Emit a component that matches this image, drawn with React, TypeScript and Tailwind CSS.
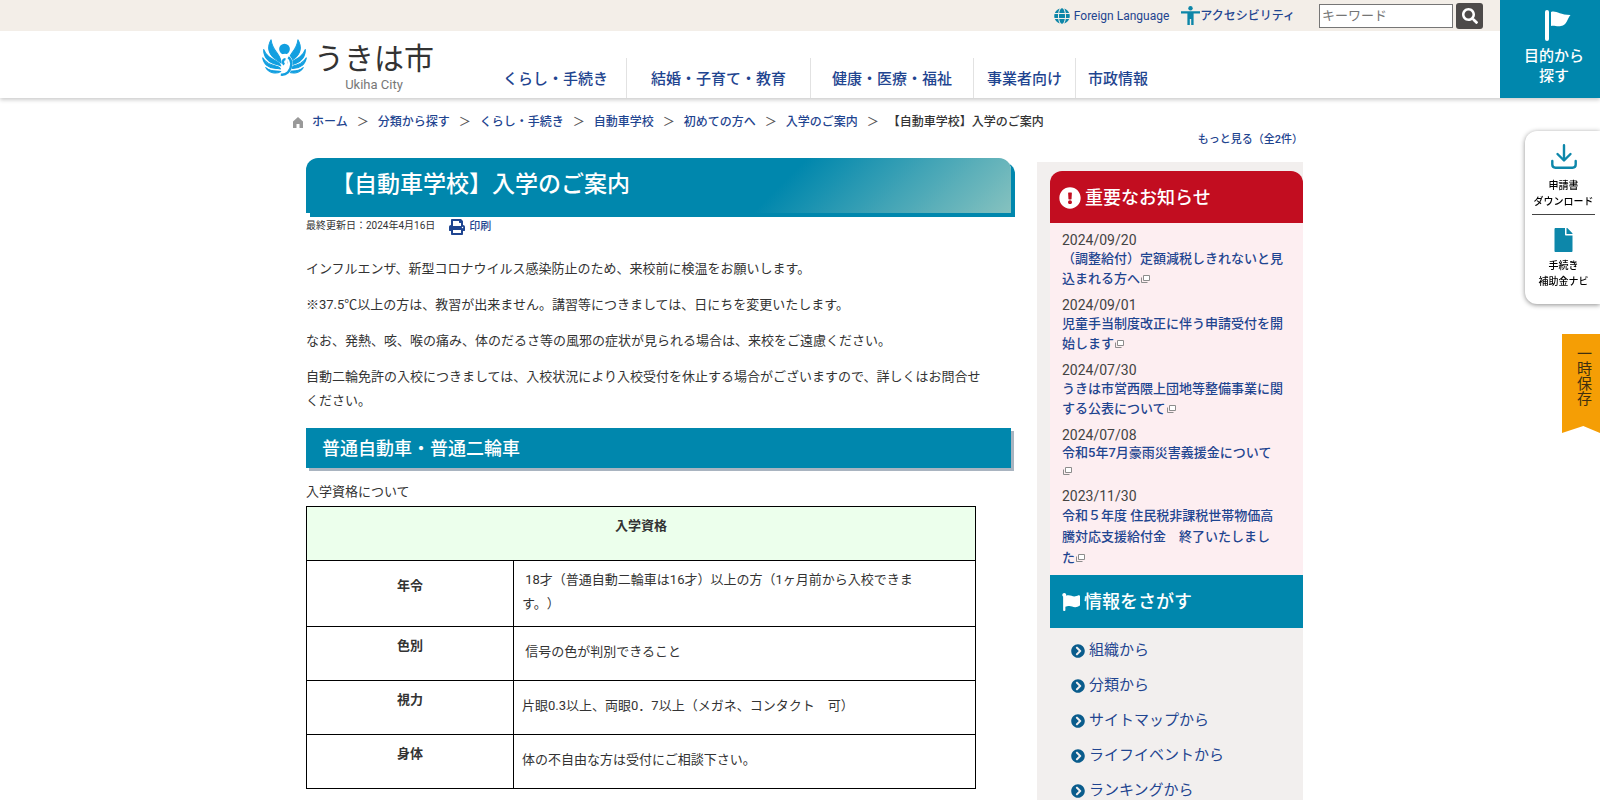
import { Fragment } from 'react'
import {
  FaChevronCircleRight,
  FaExclamationCircle,
  FaFile,
  FaFlag,
  FaGlobe,
  FaPrint,
  FaSearch,
} from 'react-icons/fa'

type NavItem = {
  label: string
  className: string
}

type NewsItem = {
  date: string
  title: string
  className: string
}

const navItems: NavItem[] = [
  { label: 'くらし・手続き', className: 'pr-[18px]' },
  { label: '結婚・子育て・教育', className: 'border-l border-[#e2e2e2] px-6' },
  { label: '健康・医療・福祉', className: 'border-l border-[#e2e2e2] px-[21px]' },
  { label: '事業者向け', className: 'border-l border-[#e2e2e2] px-[13px]' },
  { label: '市政情報', className: 'border-l border-[#e2e2e2] pl-3' },
]

const crumbs = ['ホーム', '分類から探す', 'くらし・手続き', '自動車学校', '初めての方へ', '入学のご案内']

const news: NewsItem[] = [
  {
    date: '2024/09/20',
    title: '（調整給付）定額減税しきれないと見\n込まれる方へ',
    className: 'leading-5',
  },
  {
    date: '2024/09/01',
    title: '児童手当制度改正に伴う申請受付を開\n始します',
    className: 'leading-5',
  },
  {
    date: '2024/07/30',
    title: 'うきは市営西隈上団地等整備事業に関\nする公表について',
    className: 'leading-5',
  },
  {
    date: '2024/07/08',
    title: '令和5年7月豪雨災害義援金について\n',
    className: 'leading-[18px]',
  },
  {
    date: '2023/11/30',
    title: '令和５年度 住民税非課税世帯物価高\n騰対応支援給付金　終了いたしまし\nた',
    className: 'leading-[21px]',
  },
]

const searchLinks = ['組織から', '分類から', 'サイトマップから', 'ライフイベントから', 'ランキングから']

const requirements = [
  { name: '年令', lines: ['\u00a018才（普通自動二輪車は16才）以上の方（1ヶ月前から入校できま', 'す。）'] },
  { name: '色別', lines: ['\u00a0信号の色が判別できること'] },
  { name: '視力', lines: ['片眼0.3以上、両眼0．7以上（メガネ、コンタクト　可）'] },
  { name: '身体', lines: ['体の不自由な方は受付にご相談下さい。'] },
]

function Wing() {
  return (
    <g stroke="#129fe0" strokeWidth="3" strokeLinejoin="round">
      <path d="M27 2C14 24 20 44 35 56C44 63 52 67 57 72C57 58 52 52 45 42C36 30 29 20 27 2Z" />
      <path d="M5 31C4 52 18 67 34 73C43 76 51 77 56 80C55 74 51 71 44 67C26 58 12 50 5 31Z" />
      <path d="M2 56C5 75 20 86 38 87C46 88 51 88 55 89C54 85 50 83 43 81C24 77 11 72 2 56Z" />
      <path d="M11 85C21 102 42 105 56 97C54 95 50 95 42 95C29 95 20 92 11 85Z" />
    </g>
  )
}

function LogoMark() {
  return (
    <svg viewBox="0 0 134 110" className="h-[37px] w-[45px]" fill="#129fe0" aria-hidden="true">
      <circle cx="67" cy="30" r="16" />
      <Wing />
      <g transform="translate(134 0) scale(-1 1)">
        <Wing />
      </g>
      <path
        d="M60 54C74 46 86 58 84 76C82 94 74 104 60 106"
        fill="none"
        stroke="#fff"
        strokeWidth="14"
      />
      <path
        d="M60 56C70 50 80 56 79 70C78 86 75 96 66 105"
        fill="none"
        stroke="#fff"
        strokeWidth="6"
      />
      <path
        d="M66 76C60 70 62 60 70 60M56 106C72 108 86 96 87 76C88 66 84 58 78 54"
        fill="none"
        stroke="#129fe0"
        strokeWidth="7"
      />
    </svg>
  )
}

function AccessIcon() {
  return (
    <svg viewBox="0 0 19 19" className="h-[19px] w-[19px]" fill="#0d86a8" aria-hidden="true">
      <circle cx="9.5" cy="2.2" r="2.2" />
      <path d="M0 5.2H19V7.4H12.6V19H10.2V13H8.8V19H6.4V7.4H0Z" />
    </svg>
  )
}

function PennantIcon() {
  return (
    <svg viewBox="0 0 26 31" className="h-[31px] w-[26px]" fill="currentColor" aria-hidden="true">
      <rect x="0" y="0" width="4" height="31" rx="2" />
      <path d="M6 2C11 0 14 5 25.5 5C22 9 22 15 16 16C12 17 9 15 6 16Z" />
    </svg>
  )
}

function DownloadIcon() {
  return (
    <svg
      viewBox="0 0 26 25"
      className="h-[25px] w-[26px]"
      fill="none"
      stroke="#0d87aa"
      strokeWidth="2.4"
      strokeLinecap="round"
      strokeLinejoin="round"
      aria-hidden="true"
    >
      <path d="M13 1.2V16M6.5 10L13 16.5L19.5 10" />
      <path d="M1.3 17V20.5C1.3 22.5 2.5 23.7 4.5 23.7H21.5C23.5 23.7 24.7 22.5 24.7 20.5V17" />
    </svg>
  )
}

function HomeIcon() {
  return (
    <svg viewBox="0 0 10 11" className="h-[11px] w-[10px]" fill="#999" aria-hidden="true">
      <path d="M5 0L10 4.5V11H6.5V7H3.5V11H0V4.5Z" />
    </svg>
  )
}

function NewWindowIcon() {
  return (
    <svg
      viewBox="0 0 9 8"
      className="ml-px inline-block h-2 w-[9px] align-baseline"
      fill="none"
      stroke="#8c8c8c"
      role="img"
      aria-label="新しいウィンドウで開く"
    >
      <path d="M2.5 0.5H8.5V5.5H2.5Z" fill="#fff" />
      <path d="M0.5 2.5V7.5H6.5" />
    </svg>
  )
}

function Header() {
  return (
    <header className="relative flex bg-white shadow-[0_2px_4px_rgba(0,0,0,0.2)]">
      <div className="flex-1">
        <div className="flex h-[31px] items-center justify-end bg-[#f3eee8] pr-[17px] text-xs text-[#1f4590]">
          <a href="#" className="mr-3 flex items-center gap-1">
            <FaGlobe className="size-4 text-[#0d86a8]" />
            Foreign Language
          </a>
          <a href="#" className="mr-6 flex items-center font-medium">
            <AccessIcon />
            アクセシビリティ
          </a>
          <form className="flex items-center gap-[3px]" onSubmit={(e) => e.preventDefault()}>
            <input
              type="text"
              aria-label="キーワード"
              placeholder="キーワード"
              className="h-6 w-[134px] border border-[#767676] bg-white px-[2px] text-[13px] text-[#333] placeholder:text-[#757575]"
            />
            <button
              type="submit"
              aria-label="検索"
              className="flex h-[26px] w-[27px] items-center justify-center rounded-[3px] bg-[#4d4a49] text-white"
            >
              <FaSearch className="size-4" />
            </button>
          </form>
        </div>
        <div className="mx-auto flex h-[67px] max-w-[976px] items-end">
          <a href="#" className="flex w-[241px] items-start gap-[7px] self-start pt-2">
            <LogoMark />
            <span className="flex flex-col items-center text-[#333]">
              <span className="text-[30px] leading-10">うきは市</span>
              <span className="text-[13px] leading-3 text-[#777]">Ukiha City</span>
            </span>
          </a>
          <nav className="flex text-[15px] font-medium text-[#1f4590]">
            {navItems.map((item) => (
              <a key={item.label} href="#" className={`flex h-10 items-center pt-[2px] ${item.className}`}>
                {item.label}
              </a>
            ))}
          </nav>
        </div>
      </div>
      <button
        type="button"
        className="flex w-[100px] flex-col items-center bg-[#0087ad] pt-[10px] pl-2 text-[15px] leading-5 font-medium text-white"
      >
        <span className="pl-2">
          <PennantIcon />
        </span>
        <span className="mt-[5px]">
          目的から
          <br />
          探す
        </span>
      </button>
    </header>
  )
}

function Breadcrumb() {
  return (
    <nav aria-label="パンくずリスト" className="flex h-[18px] items-center gap-[9px] text-xs font-medium">
      <HomeIcon />
      {crumbs.map((crumb) => (
        <Fragment key={crumb}>
          <a href="#" className="text-[#1f4590]">
            {crumb}
          </a>
          <span className="text-[#555]">＞</span>
        </Fragment>
      ))}
      <span>【自動車学校】入学のご案内</span>
    </nav>
  )
}

function Article() {
  return (
    <main className="flex-1 text-[13px] leading-6">
      <h1 className="flex h-[55px] items-center rounded-t-xl bg-[linear-gradient(135deg,#0087ad_66%,#86c2bf_100%)] pb-px pl-[25px] text-[23px] font-medium text-white shadow-[4px_4px_0_#0087ad]">
        【自動車学校】入学のご案内
      </h1>
      <div className="mt-1 flex h-[18px] items-center text-[10px]">
        <span>最終更新日：2024年4月16日</span>
        <a href="#" className="ml-[14px] flex items-center gap-1 pt-px text-[11px] font-medium text-[#1f4590]">
          <FaPrint className="size-4" />
          印刷
        </a>
      </div>
      <div className="mt-[22px] space-y-3 pr-6">
        <p>インフルエンザ、新型コロナウイルス感染防止のため、来校前に検温をお願いします。</p>
        <p>※37.5℃以上の方は、教習が出来ません。講習等につきましては、日にちを変更いたします。</p>
        <p>なお、発熱、咳、喉の痛み、体のだるさ等の風邪の症状が見られる場合は、来校をご遠慮ください。</p>
        <p>
          自動二輪免許の入校につきましては、入校状況により入校受付を休止する場合がございますので、詳しくはお問合せください。
        </p>
      </div>
      <h2 className="mt-[15px] flex h-10 items-center bg-[#0087ad] pt-[2px] pl-4 text-lg font-medium text-white shadow-[3px_3px_0_#a9b4c0]">
        普通自動車・普通二輪車
      </h2>
      <table className="mt-3 w-[670px] table-fixed border-collapse">
        <caption className="pb-[2px] text-left">入学資格について</caption>
        <colgroup>
          <col className="w-[207px]" />
          <col />
        </colgroup>
        <thead>
          <tr>
            <th colSpan={2} className="border border-black bg-[#ecffec] px-2 pt-[7px] pb-[22px] font-bold">
              入学資格
            </th>
          </tr>
        </thead>
        <tbody>
          {requirements.map((row) => (
            <tr key={row.name}>
              <th scope="row" className="border border-black px-2 pt-[7px] pb-[22px] font-bold">
                {row.name}
              </th>
              <td className="border border-black px-2 pt-[7px] pb-[10px]">
                {row.lines.map((line) => (
                  <div key={line}>{line}</div>
                ))}
              </td>
            </tr>
          ))}
        </tbody>
      </table>
    </main>
  )
}

function Sidebar() {
  return (
    <aside className="mt-1 w-[266px] bg-[#f2efee] pt-[9px] pl-[13px]">
      <section className="rounded-t-xl bg-[#fdeef1]">
        <h2 className="flex h-[52px] items-center gap-1 rounded-t-xl bg-[#c20d20] pt-px pl-[9px] text-lg font-medium text-white">
          <FaExclamationCircle className="size-[22px]" />
          重要なお知らせ
        </h2>
        <ul className="pt-2 pl-3">
          {news.map((item) => (
            <li key={item.date} className="pb-[7px]">
              <div className="text-sm leading-[18px] text-[#444]">{item.date}</div>
              <a
                href="#"
                className={`block text-[13px] font-medium whitespace-pre-line text-[#1f4590] ${item.className}`}
              >
                {item.title}
                <NewWindowIcon />
              </a>
            </li>
          ))}
        </ul>
      </section>
      <section>
        <h2 className="flex h-[53px] items-center gap-1 bg-[#0087ad] pl-3 text-lg font-medium text-white">
          <FaFlag className="size-[18px]" />
          情報をさがす
        </h2>
        <ul className="pt-[5px] pl-[21px] text-[15px] text-[#1f4590]">
          {searchLinks.map((label) => (
            <li key={label}>
              <a href="#" className="flex h-[35px] items-center gap-1">
                <FaChevronCircleRight className="size-[14px] text-[#0a5c8c]" />
                {label}
              </a>
            </li>
          ))}
        </ul>
      </section>
    </aside>
  )
}

function SideTools() {
  return (
    <div className="fixed top-[131px] right-0 flex flex-col items-end">
      <div className="flex w-[75px] flex-col rounded-l-xl bg-white pt-[13px] pr-[5px] pb-[14px] pl-[7px] text-center text-[10px] leading-4 font-medium text-black shadow-[0_1px_5px_rgba(0,0,0,0.45)]">
        <a href="#" className="flex flex-col items-center border-b border-[#444] pb-1">
          <DownloadIcon />
          <span className="mt-[9px]">
            申請書
            <br />
            ダウンロード
          </span>
        </a>
        <a href="#" className="flex flex-col items-center pt-[13px]">
          <FaFile className="h-6 w-[19px] text-[#0d87aa]" />
          <span className="mt-[6px]">
            手続き
            <br />
            補助金ナビ
          </span>
        </a>
      </div>
      <button
        type="button"
        className="mt-[30px] flex h-[99px] w-[38px] items-start justify-center bg-[#f59e05] pt-3 pl-1 text-[15px] leading-5 text-[#40300f] [clip-path:polygon(0_0,100%_0,100%_100%,56%_93%,0_100%)]"
      >
        <span className="[writing-mode:vertical-rl]">一時保存</span>
      </button>
    </div>
  )
}

export default function App() {
  return (
    <div className="min-h-screen bg-white font-['Roboto','Noto_Sans_CJK_JP',sans-serif] text-[#333] [text-spacing-trim:space-all]">
      <Header />
      <div className="mx-auto max-w-[1014px] pt-[15px]">
        <Breadcrumb />
        <div className="pr-1 pl-[13px]">
          <div className="mt-px text-right text-[11px] leading-4 font-medium">
            <a href="#" className="text-[#1f4590]">
              もっと見る（全2件）
            </a>
          </div>
          <div className="flex items-start gap-[26px] pt-[10px]">
            <Article />
            <Sidebar />
          </div>
        </div>
      </div>
      <SideTools />
    </div>
  )
}
